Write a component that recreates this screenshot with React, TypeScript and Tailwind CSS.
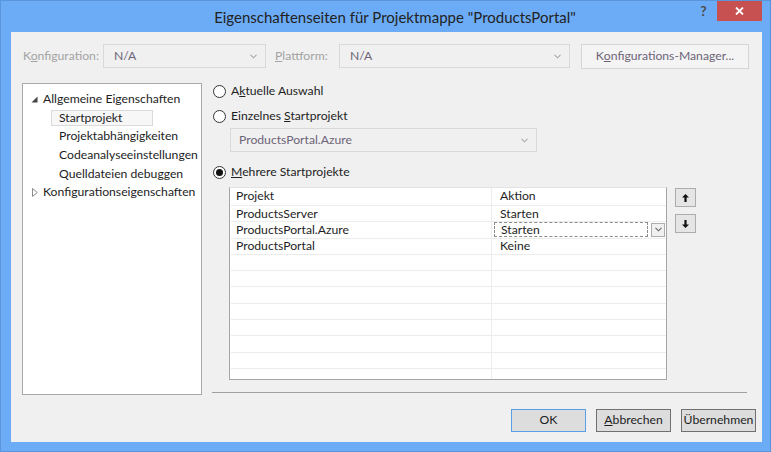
import React from 'react';

const Chevron = ({ color = '#a8a8a8' }: { color?: string }) => (
  <svg width="7" height="5" viewBox="0 0 7 5" className="shrink-0">
    <path d="M0.5 0.8 L3.5 3.8 L6.5 0.8" fill="none" stroke={color} strokeWidth="1.1" />
  </svg>
);

const Radio = ({ checked, children }: { checked?: boolean; children: React.ReactNode }) => (
  <div className="flex items-center h-[16px] ml-[1px]">
    <span className="w-[13px] h-[13px] rounded-full border border-[#333] bg-white flex items-center justify-center shrink-0">
      {checked && <span className="w-[7px] h-[7px] rounded-full bg-[#111]"></span>}
    </span>
    <span className="ml-[5px] text-[#1e1e1e]">{children}</span>
  </div>
);

const ArrowBtn = ({ up }: { up?: boolean }) => (
  <div className="w-[21px] h-[19px] bg-[#e5e5e5] border border-[#adadad] flex items-center justify-center">
    <svg width="7" height="8" viewBox="0 0 7 8" className={up ? '' : 'rotate-180'}>
      <path d="M3.5 0 L7 3.5 L4.6 3.5 L4.6 8 L2.4 8 L2.4 3.5 L0 3.5 Z" fill="#111" />
    </svg>
  </div>
);

export default function App() {
  const rows = [
    ['Projekt', 'Aktion'],
    ['ProductsServer', 'Starten'],
    ['ProductsPortal.Azure', 'Starten'],
    ['ProductsPortal', 'Keine'],
    ['', ''], ['', ''], ['', ''], ['', ''], ['', ''], ['', ''], ['', ''], ['', ''],
  ];
  return (
    <div className="w-[771px] h-[452px] bg-[#6cacf6] border border-[#5a95dc] flex flex-col font-['Lato',sans-serif] text-[12.2px] leading-none whitespace-nowrap">
      {/* title bar */}
      <div className="h-[31px] flex items-start">
        <div className="flex-1 pl-[99px] h-[32px] flex items-center justify-center text-[15px] text-[#222]">
          Eigenschaftenseiten für Projektmappe "ProductsPortal"
        </div>
        <div className="w-[27px] h-[20px] flex items-center justify-center text-[14px] font-bold text-[#4d4d4d]">?</div>
        <div className="w-[45px] h-[20px] bg-[#c75050] flex items-center justify-center mr-[8px]">
          <svg width="9" height="8" viewBox="0 0 9 8">
            <path d="M1 0.5 L8 7.5 M8 0.5 L1 7.5" stroke="#fff" strokeWidth="1.8" />
          </svg>
        </div>
      </div>

      {/* client area */}
      <div className="ml-[10px] w-[751px] h-[410px] bg-[#f0f0f0] flex flex-col">
        {/* configuration row */}
        <div className="mt-[12px] h-[24px] flex items-center pl-[12px]">
          <span className="w-[80px] text-[#a3a3a3]">K<u>o</u>nfiguration:</span>
          <div className="w-[163px] h-[24px] border border-[#d9d9d9] bg-[#f0f0f0] flex items-center justify-between pl-[10px] pr-[8px] text-[#6d6478]">
            <span>N/A</span>
            <Chevron />
          </div>
          <span className="ml-[9px] w-[64px] text-[#a3a3a3]"><u>P</u>lattform:</span>
          <div className="w-[231px] h-[24px] border border-[#d9d9d9] bg-[#f0f0f0] flex items-center justify-between pl-[10px] pr-[8px] text-[#6d6478]">
            <span>N/A</span>
            <Chevron />
          </div>
          <div className="ml-[11px] w-[168px] h-[25px] border border-[#d5d5d5] bg-[#f4f4f4] flex items-center justify-center text-[#6d6478]">
            K<u>o</u>nfigurations-Manager...
          </div>
        </div>

        {/* main row */}
        <div className="mt-[15px] flex h-[312px]">
          {/* tree */}
          <div className="ml-[11px] w-[180px] h-[312px] bg-white border border-[#a9a9a9] pt-[6px] text-[#1e1e1e]">
            <div className="h-[18.6px] flex items-center pl-[8px]">
              <svg width="7" height="7" viewBox="0 0 7 7" className="mr-[5px] shrink-0">
                <path d="M6.5 0.5 L6.5 6.5 L0.5 6.5 Z" fill="#444" />
              </svg>
              Allgemeine Eigenschaften
            </div>
            <div className="h-[18.6px] flex items-center pl-[28px]">
              <span className="h-[16px] w-[102px] border border-[#dadada] bg-[#f7f7f7] flex items-center pl-[7px]">Startprojekt</span>
            </div>
            <div className="h-[18.6px] flex items-center pl-[36px]">Projektabhängigkeiten</div>
            <div className="h-[18.6px] flex items-center pl-[36px]">Codeanalyseeinstellungen</div>
            <div className="h-[18.6px] flex items-center pl-[36px]">Quelldateien debuggen</div>
            <div className="h-[18.6px] flex items-center pl-[9px]">
              <svg width="6" height="9" viewBox="0 0 6 9" className="mr-[5px] shrink-0">
                <path d="M0.5 0.5 L5.3 4.5 L0.5 8.5 Z" fill="none" stroke="#8a8a8a" strokeWidth="1" />
              </svg>
              Konfigurationseigenschaften
            </div>
          </div>

          {/* right column */}
          <div className="ml-[10px] w-[535px] flex flex-col">
            <Radio>A<u>k</u>tuelle Auswahl</Radio>
            <div className="mt-[9px]">
              <Radio>Einzelnes <u>S</u>tartprojekt</Radio>
            </div>
            <div className="mt-[4px] ml-[18px] w-[307px] h-[24px] border border-[#d9d9d9] bg-[#f0f0f0] flex items-center justify-between pl-[8px] pr-[8px] text-[#6d6478]">
              <span>ProductsPortal.Azure</span>
              <Chevron />
            </div>
            <div className="mt-[12px]">
              <Radio checked><u>M</u>ehrere Startprojekte</Radio>
            </div>

            <div className="mt-[7px] flex">
              <div className="ml-[17px] w-[438px] h-[193px] bg-white border border-[#a5a5a5] border-t-[#e3e3e3] relative overflow-hidden">
                <div className="absolute top-0 bottom-0 left-[261px] w-[1px] bg-[#ececec]"></div>
                {rows.map((r, i) => (
                  <div key={i} className={`flex ml-[1px] border-b border-[#ececec] ${i === 0 ? 'h-[18px]' : 'h-[16.3px]'}`}>
                    <div className="w-[260px] pl-[5px] flex items-center text-[#1e1e1e]">{r[0]}</div>
                    <div className="flex-1 flex items-center relative text-[#1e1e1e]">
                      {i === 2 ? (
                        <div className="flex items-center w-full">
                          <div className="ml-[3px] w-[154px] h-[15px] border border-dashed border-[#8c8c8c] flex items-center pl-[6px]">{r[1]}</div>
                          <div className="ml-[3px] w-[14px] h-[14px] border border-[#acacac] bg-[#f0f0f0] flex items-center justify-center">
                            <Chevron color="#666" />
                          </div>
                        </div>
                      ) : (
                        <span className="pl-[9px]">{r[1]}</span>
                      )}
                    </div>
                  </div>
                ))}
              </div>
              <div className="ml-[8px] flex flex-col gap-[7px] mt-[1px]">
                <ArrowBtn up />
                <ArrowBtn />
              </div>
            </div>

            <div className="mt-[12px] h-[1px] w-[535px] bg-[#a0a0a0]"></div>
          </div>
        </div>

        {/* buttons */}
        <div className="mt-[14px] flex justify-end gap-[10px] pr-[6px]">
          <div className="w-[75px] h-[23px] border border-[#5a9fe6] bg-[#dddddd] flex items-center justify-center text-[#1e1e1e]">OK</div>
          <div className="w-[75px] h-[23px] border border-[#707070] bg-[#dddddd] flex items-center justify-center text-[#1e1e1e]"><u>A</u>bbrechen</div>
          <div className="w-[75px] h-[23px] border border-[#707070] bg-[#dddddd] flex items-center justify-center text-[#1e1e1e]">Übernehmen</div>
        </div>
      </div>
    </div>
  );
}
